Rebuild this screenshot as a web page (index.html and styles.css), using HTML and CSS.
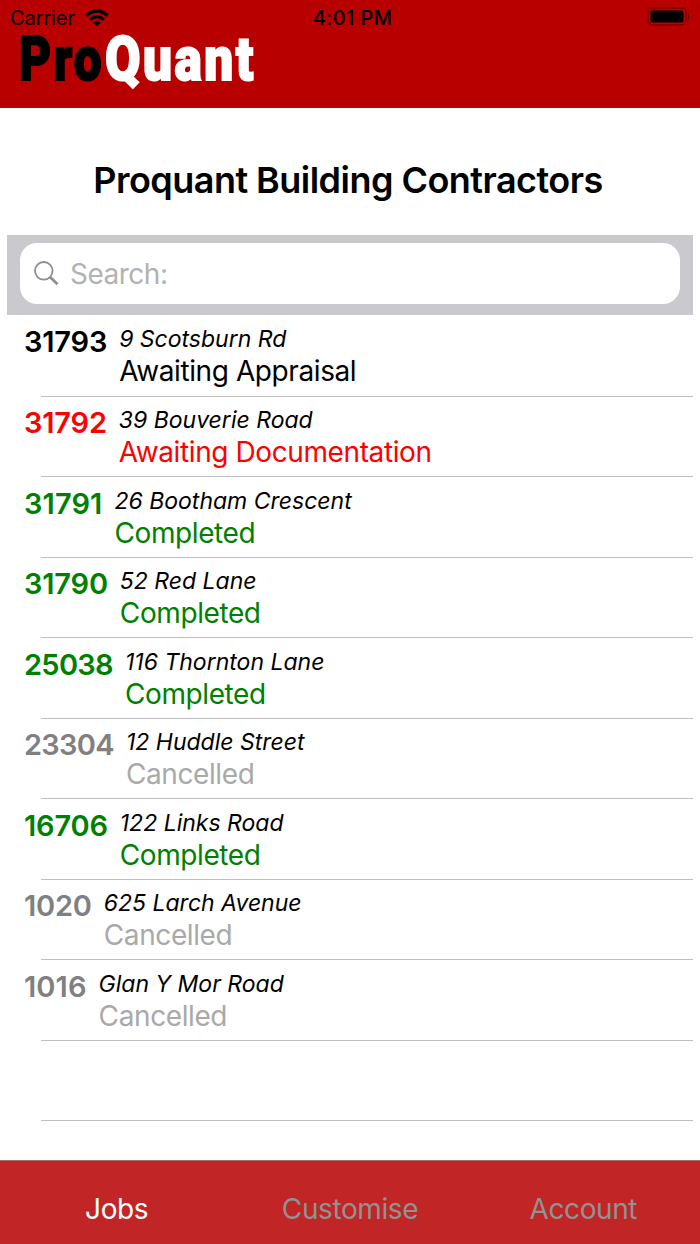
FILE: index.html
```html
<!DOCTYPE html>
<html lang="en">
<head>
    <meta charset="UTF-8">
    <meta name="viewport" content="width=device-width, initial-scale=1.0">
    <title>ProQuant</title>
    <link rel="stylesheet" href="styles.css">
</head>
<body>
    <div class="app">
        <header class="header">
            <div class="status-bar">
                <div class="carrier">
                    <span>Carrier</span>
                    <svg class="wifi" viewBox="0 0 24 18" width="24" height="18">
                        <path d="M1.5 6.6 Q12 -2.6 22.5 6.6" fill="none" stroke="#000" stroke-width="3.2"/>
                        <path d="M5.2 10.6 Q12 4.6 18.8 10.6" fill="none" stroke="#000" stroke-width="3"/>
                        <path d="M8.3 13.6 Q12 10 15.7 13.6 L12 17.2 Z"/>
                    </svg>
                </div>
                <div class="clock">4:01 PM</div>
                <svg class="battery" viewBox="0 0 44 19" width="44" height="19">
                    <rect x="1" y="1" width="38" height="17" rx="4.5" fill="none" stroke="#000" stroke-opacity=".45" stroke-width="1.2"/>
                    <rect x="3.5" y="3.5" width="33" height="12" rx="2"/>
                    <path d="M41 6.5 Q43.5 9.5 41 12.5 Z" fill-opacity=".5"/>
                </svg>
            </div>
            <svg class="logo" viewBox="0 0 270 76" width="270" height="76">
                <text class="logo-pro" x="19" y="49" textLength="85" lengthAdjust="spacingAndGlyphs">Pro</text>
                <text class="logo-quant" x="105" y="49" textLength="151" lengthAdjust="spacingAndGlyphs">Quant</text>
            </svg>
        </header>

        <main class="content">
            <h1 class="title">Proquant Building Contractors</h1>
            <div class="search-bar">
                <div class="search-field">
                    <svg class="search-icon" viewBox="0 0 25 25" width="25" height="25">
                        <circle cx="9.8" cy="9.8" r="8.8" fill="none" stroke="#8e8e93" stroke-width="1.8"/>
                        <path d="M16 16 L23.5 23.2" stroke="#8e8e93" stroke-width="2.8"/>
                    </svg>
                    <span class="placeholder">Search:</span>
                </div>
            </div>
            <ul class="jobs">
                <li class="job awaiting">
                    <span class="job-id">31793</span>
                    <div class="job-info">
                        <div class="address">9 Scotsburn Rd</div>
                        <div class="status">Awaiting Appraisal</div>
                    </div>
                </li>
                <li class="job overdue">
                    <span class="job-id">31792</span>
                    <div class="job-info">
                        <div class="address">39 Bouverie Road</div>
                        <div class="status">Awaiting Documentation</div>
                    </div>
                </li>
                <li class="job completed">
                    <span class="job-id loose">31791</span>
                    <div class="job-info">
                        <div class="address">26 Bootham Crescent</div>
                        <div class="status">Completed</div>
                    </div>
                </li>
                <li class="job completed">
                    <span class="job-id">31790</span>
                    <div class="job-info">
                        <div class="address">52 Red Lane</div>
                        <div class="status">Completed</div>
                    </div>
                </li>
                <li class="job completed">
                    <span class="job-id tight">25038</span>
                    <div class="job-info">
                        <div class="address">116 Thornton Lane</div>
                        <div class="status">Completed</div>
                    </div>
                </li>
                <li class="job cancelled">
                    <span class="job-id tight">23304</span>
                    <div class="job-info">
                        <div class="address">12 Huddle Street</div>
                        <div class="status">Cancelled</div>
                    </div>
                </li>
                <li class="job completed">
                    <span class="job-id">16706</span>
                    <div class="job-info">
                        <div class="address">122 Links Road</div>
                        <div class="status">Completed</div>
                    </div>
                </li>
                <li class="job cancelled">
                    <span class="job-id">1020</span>
                    <div class="job-info">
                        <div class="address">625 Larch Avenue</div>
                        <div class="status">Cancelled</div>
                    </div>
                </li>
                <li class="job cancelled">
                    <span class="job-id loose">1016</span>
                    <div class="job-info">
                        <div class="address">Glan Y Mor Road</div>
                        <div class="status">Cancelled</div>
                    </div>
                </li>
                <li class="job"></li>
            </ul>
        </main>

        <nav class="tabs">
            <div class="tab active">Jobs</div>
            <div class="tab">Customise</div>
            <div class="tab">Account</div>
        </nav>
    </div>
</body>
</html>
```
FILE: styles.css
```css
* {
    margin: 0;
    padding: 0;
    box-sizing: border-box;
}

body {
    font-family: 'Inter', sans-serif;
    background: #fff;
    color: #000;
}

.app {
    display: flex;
    flex-direction: column;
    width: 700px;
    height: 1244px;
    overflow: hidden;
}

.header {
    height: 108px;
    flex: none;
    background: #b90000;
}

.status-bar {
    display: grid;
    grid-template-columns: 1fr auto 1fr;
    align-items: center;
    height: 31px;
    padding: 4px 9px 0 10px;
    font-size: 20px;
    line-height: 26px;
}

.carrier {
    display: flex;
    align-items: center;
    gap: 10px;
    letter-spacing: -0.1px;
}

.clock {
    font-weight: 500;
    letter-spacing: 0.4px;
    padding-left: 4px;
}

.battery {
    justify-self: end;
    margin-bottom: 2px;
}

.logo {
    display: block;
    overflow: visible;
}

.logo text {
    font-family: 'Roboto', sans-serif;
    font-size: 62px;
    font-weight: 900;
    letter-spacing: 3px;
    stroke: #000;
    stroke-width: 2px;
}

.logo .logo-quant {
    fill: #fff;
    stroke: #fff;
}

.content {
    flex: 1;
    padding: 0 7px;
}

.title {
    height: 127px;
    padding: 50px 4px 0 0;
    font-size: 36px;
    font-weight: 600;
    line-height: 44px;
    letter-spacing: -0.53px;
    text-align: center;
}

.search-bar {
    height: 79.5px;
    padding: 8px 13px 10px;
    background: #c9c9ce;
}

.search-field {
    display: flex;
    align-items: center;
    gap: 11px;
    height: 61px;
    padding-left: 14px;
    border-radius: 17px;
    background: #fff;
    font-size: 28px;
    letter-spacing: -0.5px;
    color: #b2b2b2;
}

.jobs {
    list-style: none;
}

.job {
    display: flex;
    gap: 12px;
    height: 80.55px;
    padding: 8.6px 0 0 17px;
    background: linear-gradient(#c0c0c0, #c0c0c0) 34px 100% / 100% 1px no-repeat;
}

.jobs .job:first-child {
    height: 82px;
    padding-top: 9.5px;
}

.job-id {
    font-size: 29px;
    font-weight: 600;
    line-height: 35px;
    letter-spacing: -0.2px;
}

.job-id.loose {
    letter-spacing: 0.1px;
}

.job-id.tight {
    letter-spacing: -0.7px;
}

.address {
    color: #000;
    font-size: 23px;
    font-style: italic;
    line-height: 30px;
}

.status {
    font-size: 28px;
    line-height: 34px;
    letter-spacing: -0.4px;
}

.overdue {
    color: #f00;
}

.completed {
    color: #008000;
}

.cancelled {
    color: #808080;
}

.cancelled .status {
    color: #a9a9a9;
}

.tabs {
    display: grid;
    grid-template-columns: repeat(3, 1fr);
    flex: none;
    height: 84px;
    padding-top: 31px;
    border-top: 1px solid #a56a6a;
    background: #c12526;
}

.tab {
    font-size: 28px;
    line-height: 34px;
    letter-spacing: -0.4px;
    text-align: center;
    color: #929292;
}

.tab.active {
    color: #fff;
}
```
